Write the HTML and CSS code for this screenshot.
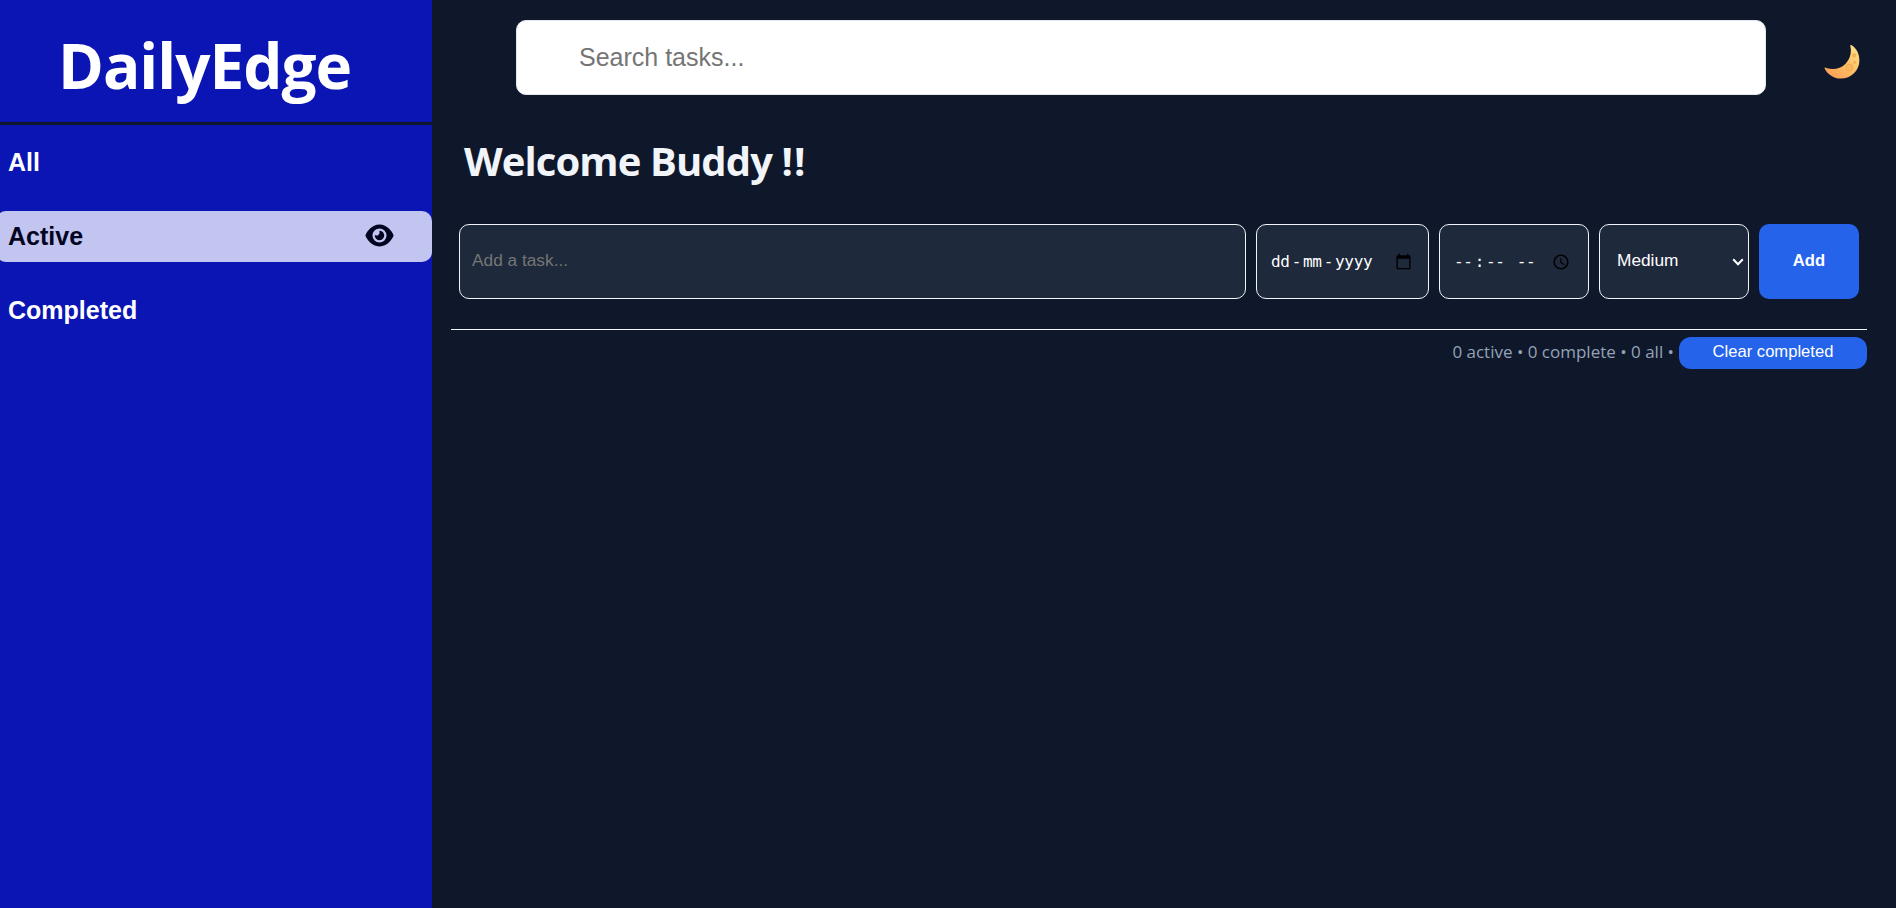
FILE: index.html
```html
<!DOCTYPE html>
<html lang="en">
<head>
<meta charset="utf-8">
<title>DailyEdge</title>
<link rel="stylesheet" href="styles.css">
</head>
<body>
<aside class="sidebar">
  <h1 class="brand"><span class="brand-text">DailyEdge</span></h1>
  <nav class="nav">
    <a class="nav-item">All</a>
    <a class="nav-item active">Active
      <svg class="eye" viewBox="0 0 576 512"><path fill="currentColor" d="M288 32c-80.800 0-145.500 36.800-192.600 80.600C48.600 156 17.300 208 2.500 243.700c-3.300 7.900-3.300 16.700 0 24.600C17.300 304 48.600 356 95.400 399.400C142.500 443.200 207.200 480 288 480s145.500-36.800 192.600-80.600c46.800-43.500 78.100-95.400 93-131.100c3.300-7.900 3.300-16.700 0-24.600c-14.900-35.700-46.200-87.700-93-131.100C433.500 68.800 368.800 32 288 32zM144 256a144 144 0 1 1 288 0 144 144 0 1 1-288 0zm144-64c0 35.300-28.700 64-64 64c-7.100 0-13.900-1.200-20.300-3.300c-5.500-1.800-11.900 1.600-11.700 7.400c.3 6.900 1.300 13.800 3.200 20.700c13.700 51.200 66.400 81.600 117.600 67.900s81.600-66.400 67.900-117.600c-11.100-41.500-47.800-69.400-88.600-71.100c-5.800-.2-9.200 6.100-7.400 11.700c2.100 6.400 3.300 13.200 3.300 20.300z"/></svg>
    </a>
    <a class="nav-item">Completed</a>
  </nav>
</aside>
<main class="main">
  <header class="topbar">
    <input class="search" type="text" placeholder="Search tasks...">
    <svg class="moon" viewBox="0 0 36 36">
      <defs><linearGradient id="moonFill" x1="0.1" y1="1" x2="0.9" y2="0"><stop offset="0" stop-color="#fb9a55"/><stop offset=".5" stop-color="#fec065"/><stop offset="1" stop-color="#ffe08a"/></linearGradient></defs>
      <path fill="url(#moonFill)" d="M27.300 1.100C26.300.6 26.200 1.200 26.400 2.200C27.800 8.800 26 15 21.400 20C16.400 24.800 9 26.200 2.300 23.900C1.100 23.400.3 23.300.7 24.500C3.500 30.600 9.800 34.600 17 34.600C27 34.600 35.400 26.600 35.400 16.500C35.400 9.800 32.400 4.200 27.300 1.100Z"/>
      <g fill="#f8b75b" stroke="#e9a24f" stroke-width=".6"><circle cx="25.300" cy="23.500" r="3.500"/><circle cx="13.300" cy="28.300" r="1.800"/><circle cx="30.300" cy="11.300" r="1.700"/><circle cx="30.700" cy="18.300" r="1.100"/></g>
    </svg>
  </header>
  <h2 class="welcome">Welcome Buddy <span class="bang">!!</span></h2>
  <form class="task-form">
    <input class="field" type="text" placeholder="Add a task...">
    <div class="field picker">
      <span class="date"><span>dd</span><span>-</span><span>mm</span><span>-</span><span>yyyy</span></span>
      <svg class="picker-icon calendar" viewBox="0 0 24 24"><path d="M20 3h-1V1h-2v2H7V1H5v2H4c-1.100 0-2 .9-2 2v16c0 1.100.9 2 2 2h16c1.100 0 2-.9 2-2V5c0-1.100-.9-2-2-2zm0 18H4V8h16v13z"/></svg>
    </div>
    <div class="field picker">
      <span class="date"><span>--</span><span>:</span><span>--</span><span class="meridiem">--</span></span>
      <svg class="picker-icon clock" viewBox="0 0 24 24"><path d="M12 2C6.500 2 2 6.500 2 12s4.500 10 10 10 10-4.500 10-10S17.500 2 12 2zm0 18c-4.400 0-8-3.600-8-8s3.600-8 8-8 8 3.600 8 8-3.600 8-8 8zm.5-13H11v6l5.200 3.200.8-1.300-4.500-2.700z"/></svg>
    </div>
    <div class="field select">Medium
      <svg class="chevron" viewBox="0 0 12 8"><path d="M1.200 1.300 6 6.200 10.800 1.300" fill="none" stroke="currentColor" stroke-width="2"/></svg>
    </div>
    <button class="add" type="button">Add</button>
  </form>
  <section class="summary">
    <span class="counts">0 active • 0 complete • 0 all •</span>
    <button class="clear" type="button">Clear completed</button>
  </section>
</main>
</body>
</html>
```
FILE: styles.css
```css
* { box-sizing: border-box; }
body {
  margin: 0;
  display: flex;
  height: 100vh;
  overflow: hidden;
  background: #0f172a;
  color: #f1f5f9;
  font-family: "Segoe UI", "Open Sans", "Noto Sans", sans-serif;
}
button, input, .nav-item, .select { font-family: "Liberation Sans", Arial, sans-serif; }
.sidebar { width: 432px; flex: none; background: #0a15b3; overflow: hidden; }
.brand {
  margin: 0;
  height: 125px;
  padding: 21px 0 0 58px;
  border-bottom: 3px solid #0f172a;
  color: #fff;
  font-size: 62px;
  line-height: 88px;
  font-weight: 700;
  white-space: nowrap;
}
.brand-text { letter-spacing: -1px; }
.nav { display: flex; flex-direction: column; gap: 23px; padding-top: 12px; margin-left: -4px; }
.nav-item {
  display: flex;
  align-items: center;
  justify-content: space-between;
  height: 51px;
  padding: 0 38px 1px 12px;
  border-radius: 10px;
  color: #fff;
  font-size: 25px;
  font-weight: 700;
}
.nav-item.active { background: #c1c5f0; color: #020420; }
.eye { width: 29px; height: 25px; margin-bottom: 1px; }
.main { flex: 1; padding: 20px 29px 0 19px; }
.topbar { display: flex; align-items: flex-start; padding-left: 65px; }
.search {
  width: 1250px;
  height: 75px;
  padding: 0 62px;
  border: 1px solid #e2e8f0;
  border-radius: 10px;
  background: #fff;
  font-size: 25px;
}
.search::placeholder, .field::placeholder { color: #757575; opacity: 1; }
.moon { width: 36px; height: 36px; margin: 24px 0 0 58px; }
.welcome {
  margin: 37px 0 0;
  padding-left: 13px;
  font-size: 40px;
  line-height: 58px;
  font-weight: 700;
  letter-spacing: -0.9px;
  white-space: nowrap;
}
.bang { letter-spacing: 1px; }
.task-form {
  display: grid;
  grid-template-columns: 787px 173px 150px 150px 100px;
  gap: 10px;
  padding: 34px 8px 30px;
  border-bottom: 1px solid #f1f5f9;
}
.field {
  height: 75px;
  padding: 0 12px 2px;
  border: 1px solid #f1f5f9;
  border-radius: 10px;
  background: #1e293b;
  color: #fff;
  font-size: 17.300px;
}
.picker { display: flex; align-items: center; justify-content: space-between; padding: 0 16px 0 13px; }
.date { display: flex; font-family: "DejaVu Sans Mono", monospace; font-size: 16px; letter-spacing: -0.3px; }
.date span { padding: 0 1px; }
.date .meridiem { padding-left: 11px; }
.picker-icon { width: 17px; height: 17px; fill: #000; }
.clock { width: 18px; height: 18px; margin-right: 2px; }
.select { display: flex; align-items: center; justify-content: space-between; padding: 0 4px 2px 17px; }
.chevron { width: 12px; height: 8px; margin-top: 3px; }
.add {
  padding: 0 0 2px;
  border: 0;
  border-radius: 10px;
  background: #2563eb;
  color: #fff;
  font-size: 16.600px;
  font-weight: 700;
}
.summary { display: flex; justify-content: flex-end; align-items: center; gap: 5px; padding-top: 7px; }
.counts { color: #94a3b8; font-size: 17px; line-height: 30px; padding-bottom: 2px; white-space: nowrap; }
.clear {
  width: 188px;
  height: 32px;
  padding: 0 0 2px;
  border: 0;
  border-radius: 12px;
  background: #2563eb;
  color: #fff;
  font-size: 16.600px;
}
```
